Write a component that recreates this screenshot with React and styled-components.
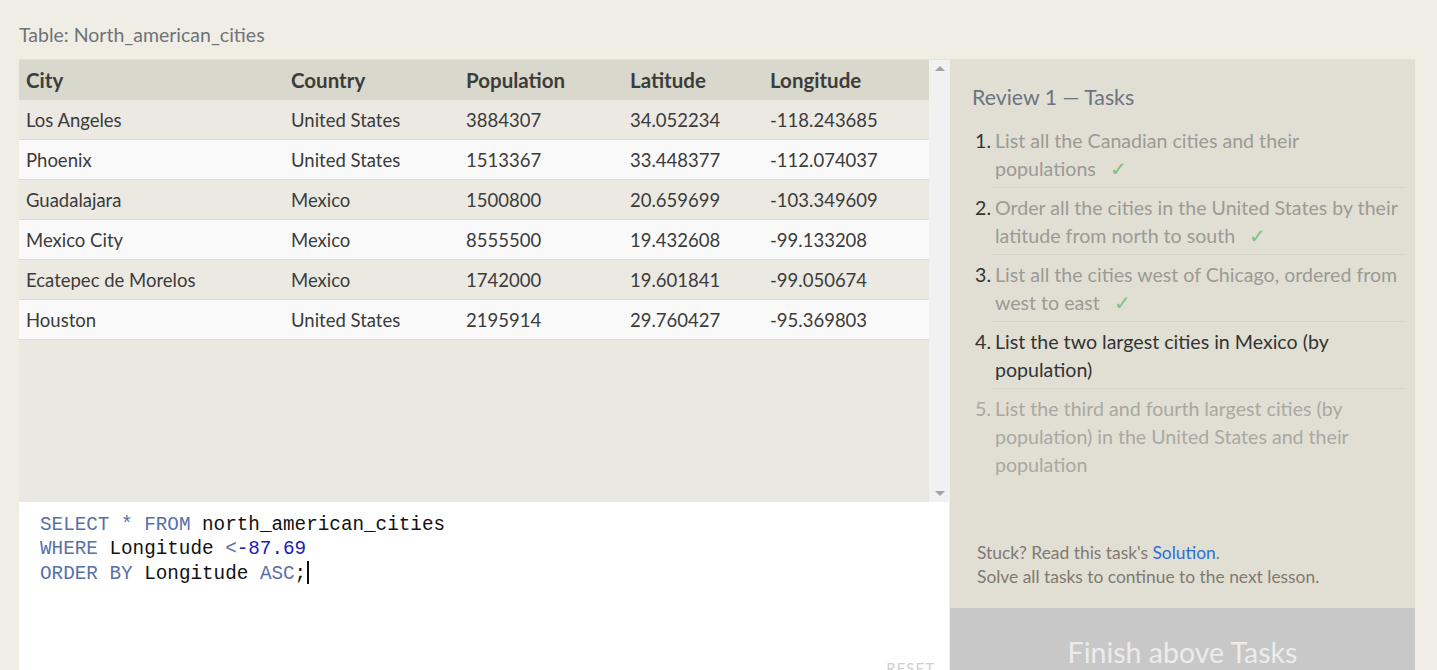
import React from 'react';
import styled, { createGlobalStyle } from 'styled-components';

const GlobalStyle = createGlobalStyle`
  html, body {
    margin: 0;
    padding: 0;
    background: #f0ede5;
    font-family: Lato, "Open Sans", sans-serif;
    overflow: hidden;
  }
`;

const Page = styled.div`
  padding: 21px 22px 0 19px;
  height: 670px;
  box-sizing: border-box;
  overflow: hidden;
`;

const Caption = styled.div`
  font-size: 19.5px;
  line-height: 27px;
  color: #6f7478;
  margin-bottom: 11px;
`;

const Layout = styled.div`
  display: grid;
  grid-template-columns: 931px 465px;
`;

const LeftColumn = styled.div`
  display: flex;
  flex-direction: column;
`;

const TableArea = styled.div`
  display: flex;
  height: 443px;
  background: #eae9e1;
  border-top: 1px solid #e4e2da;
  box-sizing: border-box;
`;

const TableScroll = styled.div`
  flex: 1;
`;

const DataTable = styled.table`
  width: 100%;
  border-collapse: collapse;
  table-layout: fixed;
  font-size: 18.5px;
  color: #3b3b3b;
`;

const HeadCell = styled.th`
  text-align: left;
  font-weight: 700;
  font-size: 20.5px;
  height: 40px;
  padding: 0 0 0 7px;
  background: #d9d8cc;
  color: #3c3c3c;
  width: ${(p) => p.$w || 'auto'};
`;

const Row = styled.tr`
  background: ${(p) => (p.$odd ? '#ebe9e2' : '#f9f9f9')};
  border-bottom: 1px solid #dddbd4;
`;

const Cell = styled.td`
  height: 39px;
  padding: 0 0 0 7px;
`;

const Scrollbar = styled.div`
  width: 21px;
  background: #f1f1f1;
  display: flex;
  flex-direction: column;
  justify-content: space-between;
  align-items: center;
  padding: 6px 0;
  box-sizing: border-box;
`;

const Arrow = styled.div`
  width: 0;
  height: 0;
  border-left: 5px solid transparent;
  border-right: 5px solid transparent;
  ${(p) =>
    p.$down
      ? 'border-top: 5px solid #a3a3a3;'
      : 'border-bottom: 5px solid #a3a3a3;'}
`;

const Editor = styled.div`
  background: #ffffff;
  height: 190px;
  padding: 11px 14px 14px 21px;
  box-sizing: border-box;
  display: flex;
  flex-direction: column;
  margin-right: 1px;
`;

const Code = styled.pre`
  margin: 0;
  font-family: "Liberation Mono", "DejaVu Sans Mono", monospace;
  font-size: 19.3px;
  line-height: 24px;
  color: #111;
`;

const Kw = styled.span`
  color: #5870a8;
`;

const Num = styled.span`
  color: #1c1cb8;
`;

const Caret = styled.span`
  display: inline-block;
  width: 2px;
  height: 23px;
  background: #111;
  vertical-align: -5px;
  margin-left: 1px;
`;

const ResetButton = styled.div`
  margin-top: auto;
  align-self: flex-end;
  font-size: 15px;
  line-height: 20px;
  letter-spacing: 1px;
  color: #cfcfcf;
`;

const RightColumn = styled.div`
  display: flex;
  flex-direction: column;
`;

const TasksPanel = styled.div`
  background: #e1dfd4;
  height: 549px;
  padding: 26px 10px 19px 22px;
  box-sizing: border-box;
  display: flex;
  flex-direction: column;
`;

const PanelTitle = styled.div`
  font-size: 21.3px;
  line-height: 24px;
  color: #6b7480;
  margin-bottom: 12px;
`;

const TaskList = styled.ol`
  list-style: none;
  margin: 0;
  padding: 0;
`;

const TaskItem = styled.li`
  display: grid;
  grid-template-columns: 20px 1fr;
  font-size: 19.6px;
  line-height: 28px;
`;

const TaskNum = styled.span`
  padding: 6px 0 0 3px;
  color: ${(p) => (p.$muted ? '#a9a8a2' : '#333333')};
`;

const TaskText = styled.span`
  padding: 6px 0 4px 3px;
  border-bottom: ${(p) => (p.$last ? 'none' : '1px solid #d6d4c9')};
  color: ${(p) => p.$color};
`;

const Check = styled.span`
  color: #7cc481;
  margin-left: 14px;
`;

const Footer = styled.div`
  margin-top: auto;
  padding-left: 5px;
  font-size: 17.4px;
  line-height: 24px;
  color: #807972;
`;

const SolutionLink = styled.a`
  color: #2a6fd8;
  text-decoration: none;
`;

const FinishButton = styled.div`
  background: #c8c8c8;
  height: 100px;
  display: flex;
  justify-content: center;
  padding-top: 26px;
  box-sizing: border-box;
  font-size: 28.5px;
  line-height: 36px;
  color: #ececec;
`;

// widths are content widths (the 7px left padding comes on top)
const columns = [
  { key: 'city', label: 'City', w: '258px' },
  { key: 'country', label: 'Country', w: '168px' },
  { key: 'population', label: 'Population', w: '157px' },
  { key: 'lat', label: 'Latitude', w: '133px' },
  { key: 'lng', label: 'Longitude' },
];

const rows = [
  ['Los Angeles', 'United States', '3884307', '34.052234', '-118.243685'],
  ['Phoenix', 'United States', '1513367', '33.448377', '-112.074037'],
  ['Guadalajara', 'Mexico', '1500800', '20.659699', '-103.349609'],
  ['Mexico City', 'Mexico', '8555500', '19.432608', '-99.133208'],
  ['Ecatepec de Morelos', 'Mexico', '1742000', '19.601841', '-99.050674'],
  ['Houston', 'United States', '2195914', '29.760427', '-95.369803'],
];

const tasks = [
  { text: 'List all the Canadian cities and their populations', done: true },
  { text: 'Order all the cities in the United States by their latitude from north to south', done: true },
  { text: 'List all the cities west of Chicago, ordered from west to east', done: true },
  { text: 'List the two largest cities in Mexico (by population)', current: true },
  { text: 'List the third and fourth largest cities (by population) in the United States and their population' },
];

const App = () => {
  return (
    <>
      <GlobalStyle />
      <Page>
        <Caption>Table: North_american_cities</Caption>
        <Layout>
          <LeftColumn>
            <TableArea>
              <TableScroll>
                <DataTable>
                  <thead>
                    <tr>
                      {columns.map((c) => (
                        <HeadCell key={c.key} $w={c.w}>{c.label}</HeadCell>
                      ))}
                    </tr>
                  </thead>
                  <tbody>
                    {rows.map((r, i) => (
                      <Row key={r[0]} $odd={i % 2 === 0}>
                        {r.map((v, j) => (
                          <Cell key={j}>{v}</Cell>
                        ))}
                      </Row>
                    ))}
                  </tbody>
                </DataTable>
              </TableScroll>
              <Scrollbar>
                <Arrow />
                <Arrow $down />
              </Scrollbar>
            </TableArea>

            <Editor>
              <Code>
                <Kw>SELECT</Kw> <Kw>*</Kw> <Kw>FROM</Kw> north_american_cities{'\n'}
                <Kw>WHERE</Kw> Longitude <Kw>&lt;</Kw><Num>-87.69</Num>{'\n'}
                <Kw>ORDER</Kw> <Kw>BY</Kw> Longitude <Kw>ASC</Kw>;<Caret />
              </Code>
              <ResetButton>RESET</ResetButton>
            </Editor>
          </LeftColumn>

          <RightColumn>
            <TasksPanel>
              <PanelTitle>Review 1 — Tasks</PanelTitle>
              <TaskList>
                {tasks.map((t, i) => (
                  <TaskItem key={i}>
                    <TaskNum $muted={!t.done && !t.current}>{i + 1}.</TaskNum>
                    <TaskText
                      $last={i === tasks.length - 1}
                      $color={t.current ? '#333333' : t.done ? '#9b9a95' : '#a9a8a2'}
                    >
                      {t.text}
                      {t.done && <Check>✓</Check>}
                    </TaskText>
                  </TaskItem>
                ))}
              </TaskList>
              <Footer>
                Stuck? Read this task's <SolutionLink href="#">Solution</SolutionLink>.
                <br />
                Solve all tasks to continue to the next lesson.
              </Footer>
            </TasksPanel>
            <FinishButton>Finish above Tasks</FinishButton>
          </RightColumn>
        </Layout>
      </Page>
    </>
  );
};

export default App;
